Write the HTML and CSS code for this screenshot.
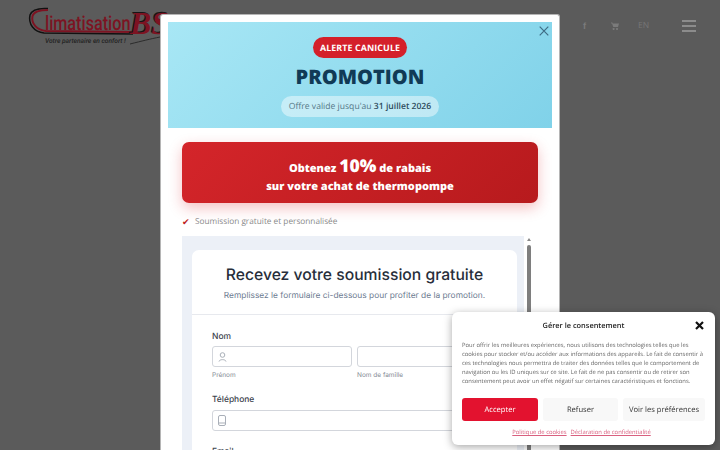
FILE: index.html
```html
<!DOCTYPE html>
<html lang="fr">
<head>
<meta charset="utf-8">
<title>Climatisation BS</title>
<link rel="stylesheet" href="styles.css">
</head>
<body>
<header class="site-header">
  <div class="logo">
    <svg class="logo-swoosh" width="170" height="48" viewBox="0 0 170 48">
      <path d="M28 8.500 C20 8 12 9 10 15 C8 24 14 32 24 33 L113 34" fill="none" stroke="#111" stroke-width="1.500"/>
      <path d="M28 10 C22 10 14 11 12.500 16 C11 24 17 30 26 31 L113 32" fill="none" stroke="#7d1322" stroke-width="2"/>
      <path d="M110 44 C122 41 130 39 140 37" fill="none" stroke="#2c2c2c" stroke-width="1"/>
    </svg>
    <span class="logo-name">limatisation</span>
    <span class="logo-bs">BS</span>
    <span class="logo-tag">Votre partenaire en confort !</span>
  </div>
  <nav class="header-nav">
    <span class="nav-fb">f</span>
    <svg class="nav-cart" width="8" height="8" viewBox="0 0 8 8"><path d="M0 .5h1.400l.3 1H8L7 5H2.300L1 1.400H0zM2.600 6a1 1 0 1 0 .01 0zM6 6a1 1 0 1 0 .01 0z" fill="#7b7b7b"/></svg>
    <span class="nav-lang">EN</span>
    <span class="burger"><i></i><i></i><i></i></span>
  </nav>
</header>

<main class="modal">
  <section class="hero">
    <svg class="close" width="10" height="10" viewBox="0 0 10 10"><path d="M.7.7l8.600 8.600M9.300.7L.7 9.300" stroke="#3f6d85" stroke-width="1.200" fill="none"/></svg>
    <span class="badge">ALERTE CANICULE</span>
    <h1 class="promo">PROMOTION</h1>
    <span class="validity">Offre valide jusqu'au <strong>31 juillet 2026</strong></span>
  </section>

  <section class="offer">
    <p class="offer-line">Obtenez <span class="offer-big">10%</span> de rabais</p>
    <p class="offer-line offer-line-second">sur votre achat de thermopompe</p>
  </section>

  <p class="perk"><span class="check">✔</span>Soumission gratuite et personnalisée</p>

  <div class="frame-row">
    <section class="frame">
      <div class="card">
        <div class="card-head">
          <h2 class="card-title">Recevez votre soumission gratuite</h2>
          <p class="card-sub">Remplissez le formulaire ci-dessous pour profiter de la promotion.</p>
        </div>
        <form class="form">
          <div class="label">Nom</div>
          <div class="two">
            <div>
              <div class="input">
                <svg width="9" height="10" viewBox="0 0 9 10"><circle cx="4.500" cy="3" r="2.300" fill="none" stroke="#a9afb8"/><path d="M1 9.500c.5-2.500 6.500-2.500 7 0" fill="none" stroke="#a9afb8"/></svg>
              </div>
              <div class="hint">Prénom</div>
            </div>
            <div>
              <div class="input"></div>
              <div class="hint">Nom de famille</div>
            </div>
          </div>
          <div class="label label-phone">Téléphone</div>
          <div class="input">
            <svg width="8" height="11" viewBox="0 0 8 11"><rect x=".5" y=".5" width="7" height="10" rx="1.500" fill="none" stroke="#a9afb8"/><path d="M1 8h6" stroke="#a9afb8"/></svg>
          </div>
          <div class="label label-mail">Email</div>
        </form>
      </div>
    </section>
    <div class="scrollbar">
      <span class="scroll-arrow"></span>
      <span class="scroll-thumb"></span>
    </div>
  </div>
</main>

<aside class="cookie">
  <div class="cookie-head">
    <span class="cookie-title">Gérer le consentement</span>
    <svg class="cookie-close" width="9" height="9" viewBox="0 0 9 9"><path d="M1 1l7 7M8 1L1 8" stroke="#111" stroke-width="2.200" fill="none"/></svg>
  </div>
  <p class="cookie-text">Pour offrir les meilleures expériences, nous utilisons des technologies telles que les cookies pour stocker et/ou accéder aux informations des appareils. Le fait de consentir à ces technologies nous permettra de traiter des données telles que le comportement de navigation ou les ID uniques sur ce site. Le fait de ne pas consentir ou de retirer son consentement peut avoir un effet négatif sur certaines caractéristiques et fonctions.</p>
  <div class="cookie-buttons">
    <span class="btn btn-accept">Accepter</span>
    <span class="btn">Refuser</span>
    <span class="btn">Voir les préférences</span>
  </div>
  <div class="cookie-links">
    <a>Politique de cookies</a>
    <a>Déclaration de confidentialité</a>
  </div>
</aside>
</body>
</html>
```

FILE: styles.css
```css
* { box-sizing: border-box; }

html, body {
  margin: 0;
  height: 100%;
  overflow: hidden;
}

body {
  background: #5b5b5b;
  font-family: "Open Sans", sans-serif;
  text-rendering: geometricPrecision;
}

h1, h2, p { margin: 0; }

.site-header {
  height: 50px;
  display: flex;
  justify-content: flex-end;
}

.logo {
  position: absolute;
  left: 20px;
  top: 0;
  width: 170px;
  height: 50px;
}

.logo-swoosh { position: absolute; left: 0; top: 0; }

.logo-name {
  position: absolute;
  left: 25px;
  top: 9px;
  font: 500 20px/28px Roboto, sans-serif;
  color: #7d1322;
  white-space: nowrap;
  transform: scaleX(.81);
  transform-origin: left center;
}

.logo-bs {
  position: absolute;
  left: 110px;
  top: 3px;
  font: italic 700 32px/40px "Liberation Serif", serif;
  color: #7d1322;
  text-shadow: -1px -1px 0 #161616;
}

.logo-tag {
  position: absolute;
  left: 25px;
  top: 36px;
  font: italic 500 6.600px/11px Roboto, sans-serif;
  color: #222;
  white-space: nowrap;
}

.header-nav {
  position: absolute;
  left: 580px;
  top: 17px;
  display: flex;
  align-items: center;
  height: 18px;
}

.nav-fb {
  font: 700 9px/18px "Liberation Sans", sans-serif;
  color: #7b7b7b;
  width: 28px;
  padding-left: 3px;
}

.nav-cart { margin: 0 19px 0 3px; }

.nav-lang {
  font: 400 8.500px/18px "Open Sans", sans-serif;
  color: #767676;
  width: 44px;
}

.burger {
  display: flex;
  flex-direction: column;
  gap: 2.500px;
  width: 14px;
}

.burger i {
  display: block;
  height: 2.500px;
  background: #8c8c8c;
}

.modal {
  position: absolute;
  left: 160px;
  top: 14px;
  width: 400px;
  height: 436px;
  background: #fff;
  border: 1px solid #b5b5b5;
  border-bottom: 0;
  border-radius: 3px 3px 0 0;
  padding: 7px 7px 0;
  overflow: hidden;
}

.hero {
  position: relative;
  height: 106px;
  background: linear-gradient(135deg, #a8e7f5, #80d2e9);
  display: flex;
  flex-direction: column;
  align-items: center;
  padding-top: 15px;
}

.close { position: absolute; right: 3px; top: 4px; }

.badge {
  height: 21px;
  padding: 0 7px;
  border-radius: 11px;
  background: #d4202a;
  color: #fff;
  font-size: 8.900px;
  font-weight: 700;
  line-height: 21px;
  letter-spacing: .1px;
}

.promo {
  margin-top: 5px;
  font-size: 20px;
  line-height: 28px;
  font-weight: 800;
  color: #113a56;
}

.validity {
  margin-top: 5px;
  height: 21px;
  padding: 0 8px;
  border-radius: 11px;
  background: rgba(255, 255, 255, .45);
  color: #557887;
  font-size: 8.600px;
  line-height: 21px;
}

.validity strong { font-weight: 600; color: #2c4a5c; }

.offer {
  margin: 14px 14px 0;
  height: 61px;
  border-radius: 7px;
  background: linear-gradient(135deg, #d4252a, #b71a1d);
  box-shadow: 0 5px 14px rgba(217, 34, 41, .28);
  color: #fff;
  font-weight: 800;
  font-size: 11px;
  text-align: center;
  padding-top: 14px;
}

.offer-line { line-height: 20px; height: 20px; }

.offer-line-second { margin-top: 1px; }

.offer-big { font-size: 17.500px; line-height: 20px; }

.perk {
  margin: 13px 0 0 14px;
  font-size: 8.250px;
  line-height: 12px;
  color: #8a8a8a;
  display: flex;
  align-items: center;
}

.check {
  color: #c01e25;
  font-size: 9px;
  width: 13px;
}

.frame-row {
  margin: 8px 0 0 14px;
  display: flex;
  height: 230px;
}

.frame {
  width: 342px;
  background: #ecf0f7;
  padding: 14px 0 0 10px;
  overflow: hidden;
}

.card {
  width: 325px;
  height: 300px;
  background: #fff;
  border-radius: 7px 7px 0 0;
}

.card-head {
  height: 65px;
  padding-top: 13px;
  border-bottom: 1px solid #e7e9ee;
  text-align: center;
}

.card-title {
  font: 500 15.700px/24px Inter, sans-serif;
  color: #272e3a;
}

.card-sub {
  margin-top: 3px;
  font: 400 8.400px/12px Inter, sans-serif;
  color: #6b7a90;
}

.form { padding: 16px 20px 0; }

.label {
  font: 500 8.450px/12px Inter, sans-serif;
  color: #3d434e;
}

.two {
  margin-top: 3px;
  display: grid;
  grid-template-columns: 140px 140px;
  gap: 5px;
}

.input {
  height: 21px;
  background: #fff;
  border: 1px solid #d3d6dc;
  border-radius: 3px;
  padding-left: 5px;
  display: flex;
  align-items: center;
}

.hint {
  margin-top: 3px;
  font: 400 6.500px/10px Inter, sans-serif;
  color: #858b95;
}

.label-phone { margin: 14px 0 4px; }

.label-mail { margin-top: 15px; }

.scrollbar {
  width: 8px;
  margin-left: 1px;
  position: relative;
  display: flex;
  flex-direction: column;
  align-items: center;
}

.scroll-arrow {
  margin-top: 2px;
  border: 2px solid transparent;
  border-top: 0;
  border-bottom: 3px solid #888;
}

.scroll-thumb {
  margin-top: 4px;
  width: 4px;
  flex: 1;
  border-radius: 2px;
  background: #7e7e7e;
}

.cookie {
  position: fixed;
  left: 452px;
  top: 312px;
  width: 263px;
  height: 133px;
  background: #fff;
  border-radius: 6px;
  box-shadow: 0 2px 8px rgba(0, 0, 0, .35);
  padding: 0 10px;
}

.cookie-head {
  position: relative;
  height: 26px;
  padding-top: 8px;
  text-align: center;
}

.cookie-title {
  font-size: 7.400px;
  font-weight: 600;
  line-height: 12px;
  color: #222;
  display: block;
}

.cookie-close { position: absolute; right: 1px; top: 9px; }

.cookie-text {
  margin-top: 3px;
  font-size: 5.850px;
  line-height: 9px;
  color: #666;
  height: 47px;
}

.cookie-buttons {
  display: grid;
  grid-template-columns: 76px 75px 82px;
  gap: 5px;
  margin-top: 10px;
}

.btn {
  height: 23px;
  border-radius: 3px;
  background: #f8f8f8;
  color: #333;
  font-size: 7.600px;
  font-weight: 500;
  line-height: 24px;
  text-align: center;
  white-space: nowrap;
}

.btn-accept { background: #e3122f; color: #fff; }

.cookie-links {
  margin-top: 6px;
  margin-right: 4px;
  display: flex;
  justify-content: center;
  gap: 4px;
  font-size: 5.850px;
  line-height: 10px;
  color: #d9607f;
}

.cookie-links a { text-decoration: underline; }
```
